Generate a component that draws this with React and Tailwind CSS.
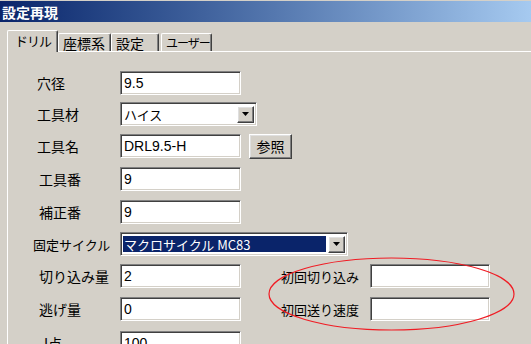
const jp = "font-['Noto_Sans_CJK_JP','Noto_Sans_CJK_SC',sans-serif]";
const field =
  "h-[24px] border border-t-[#808080] border-l-[#808080] border-b-white border-r-white bg-white shadow-[inset_1px_1px_0_#404040,inset_-1px_-1px_0_#d4d0c8] px-[3px] flex items-center text-[14px] leading-none font-['Liberation_Sans','Noto_Sans_CJK_JP',sans-serif] text-black";
const raised =
  "bg-[#d4d0c8] border border-t-white border-l-white border-b-[#404040] border-r-[#404040] shadow-[inset_-1px_-1px_0_#808080,inset_1px_1px_0_#dfdfdf]";

function Arrow() {
  return (
    <div className={`${raised} w-[17px] h-[17px] flex items-center justify-center`}>
      <svg width="7" height="4" viewBox="0 0 7 4">
        <path d="M0 0h7L3.5 4z" fill="#000" />
      </svg>
    </div>
  );
}

function Field({ value, w = "w-[121px]" }) {
  return <div className={`${field} ${w}`}>{value}</div>;
}

function Label({ children, pad = "pl-[29px]", size = "text-[14px]" }) {
  return (
    <div className={`w-[112px] ${pad} ${size} ${jp} leading-none text-black whitespace-nowrap`}>
      {children}
    </div>
  );
}

function Tab({ children, active, w, size = "text-[14px]" }) {
  if (active) {
    return (
      <div
        className={`${w} h-[22px] -mb-px relative z-10 bg-[#d4d0c8] border-t border-l border-t-white border-l-white border-r border-r-[#404040] shadow-[inset_-1px_0_0_#808080] rounded-tl-[2px] rounded-tr-[2px] flex items-start pt-[3px] pl-[7px] whitespace-nowrap ${size} leading-none ${jp}`}
      >
        {children}
      </div>
    );
  }
  return (
    <div
      className={`${w} h-[18px] bg-[#d4d0c8] border-t border-l border-t-white border-l-white border-r border-r-[#404040] shadow-[inset_-1px_0_0_#808080] rounded-tl-[2px] rounded-tr-[2px] flex items-center pl-[4px] whitespace-nowrap ${size} leading-none ${jp}`}
    >
      {children}
    </div>
  );
}

export default function App() {
  return (
    <div className="w-[531px] h-[344px] bg-[#d4d0c8] overflow-hidden relative text-black">
      <div className="h-[22px] border-t border-t-[#d4d0c8] bg-gradient-to-r from-[#0a246a] to-[#a6caf0] flex items-center pl-[2px]">
        <span className={`text-white font-bold text-[14px] leading-none ${jp}`}>設定再現</span>
      </div>

      <div className="h-[29px] flex items-end pl-[7px]">
        <Tab active w="w-[51px]" size="text-[13px] tracking-[-1px]">ドリル</Tab>
        <Tab w="w-[53px]">座標系</Tab>
        <Tab w="w-[48px]">設定</Tab>
        <div className="w-[2px]" />
        <Tab w="w-[51px]" size="text-[12px] tracking-[-1px]">ユーザー</Tab>
      </div>

      <div className="ml-[7px] border-t border-l border-t-white border-l-white pt-[19px] flex flex-col">
        <div className="flex items-center h-[24px]">
          <Label>穴径</Label>
          <Field value="9.5" />
        </div>

        <div className="flex items-center h-[22px] mt-[8px]">
          <Label>工具材</Label>
          <div className={`${field} w-[137px] h-[22px] pr-[2px] justify-between`}>
            <span className={`${jp} text-[13px]`}>ハイス</span>
            <Arrow />
          </div>
        </div>

        <div className="flex items-center h-[24px] mt-[9px]">
          <Label>工具名</Label>
          <Field value="DRL9.5-H" />
          <div className={`${raised} ml-[8px] w-[43px] h-[25px] flex items-center justify-center text-[14px] leading-none ${jp}`}>
            参照
          </div>
        </div>

        <div className="flex items-center h-[24px] mt-[9px]">
          <Label pad="pl-[31px]">工具番</Label>
          <Field value="9" />
        </div>

        <div className="flex items-center h-[24px] mt-[9px]">
          <Label pad="pl-[31px]">補正番</Label>
          <Field value="9" />
        </div>

        <div className="flex items-center h-[22px] mt-[9px]">
          <Label pad="pl-[25px]" size="text-[13px]">固定サイクル</Label>
          <div className={`${field} w-[228px] h-[22px] pl-[2px] pr-[2px] gap-[2px]`}>
            <div className={`flex-1 h-[16px] bg-[#0a246a] text-white flex items-center pl-[1px] text-[13px] ${jp}`}>
              マクロサイクル MC83
            </div>
            <Arrow />
          </div>
        </div>

        <div className="flex items-center h-[24px] mt-[9px]">
          <Label pad="pl-[31px]">切り込み量</Label>
          <Field value="2" />
          <div className={`ml-[40px] w-[89px] text-[13px] leading-none whitespace-nowrap ${jp}`}>初回切り込み</div>
          <Field value="" w="w-[120px]" />
        </div>

        <div className="flex items-center h-[24px] mt-[9px]">
          <Label pad="pl-[31px]">逃げ量</Label>
          <Field value="0" />
          <div className={`ml-[40px] w-[89px] text-[13px] leading-none whitespace-nowrap ${jp}`}>初回送り速度</div>
          <Field value="" w="w-[120px]" />
        </div>

        <div className="flex items-center h-[24px] mt-[10px]">
          <Label pad="pl-[36px]">I点</Label>
          <Field value="100" />
        </div>
      </div>

      <svg className="absolute left-0 top-0 pointer-events-none" width="531" height="344">
        <ellipse cx="391.5" cy="294" rx="122.5" ry="36" fill="none" stroke="#f01c24" strokeWidth="1.2" />
      </svg>
    </div>
  );
}
